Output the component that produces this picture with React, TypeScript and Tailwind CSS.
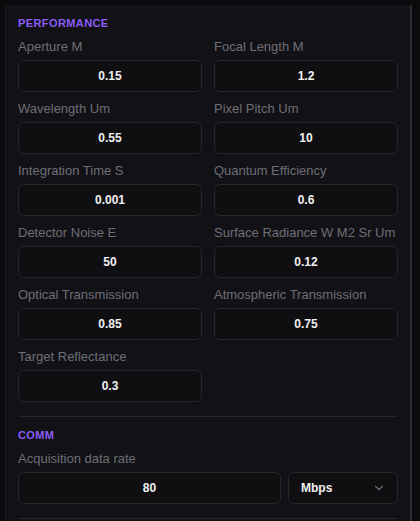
import React from 'react';
import { ChevronDown } from 'lucide-react';

const fields = [
  { label: 'Aperture M', value: '0.15' },
  { label: 'Focal Length M', value: '1.2' },
  { label: 'Wavelength Um', value: '0.55' },
  { label: 'Pixel Pitch Um', value: '10' },
  { label: 'Integration Time S', value: '0.001' },
  { label: 'Quantum Efficiency', value: '0.6' },
  { label: 'Detector Noise E', value: '50' },
  { label: 'Surface Radiance W M2 Sr Um', value: '0.12' },
  { label: 'Optical Transmission', value: '0.85' },
  { label: 'Atmospheric Transmission', value: '0.75' },
  { label: 'Target Reflectance', value: '0.3' },
];

const Field = ({ label, value }: { label: string; value: string }) => (
  <div className="flex flex-col">
    <label className="h-[18px] mb-1 text-[13px] leading-[18px] text-[#6e6e76] whitespace-nowrap">{label}</label>
    <input
      readOnly
      value={value}
      className="h-8 w-full rounded-md border border-[#26262b] bg-[#0f0f12] text-center text-[12px] font-bold text-[#f1f1f3] outline-none"
    />
  </div>
);

const SectionTitle = ({ children }: { children: React.ReactNode }) => (
  <h3 className="h-4 mb-[7px] text-[11px] leading-4 font-bold tracking-[0.4px] text-[#8b5cf6] uppercase">{children}</h3>
);

export default function App() {
  return (
    <div className="min-h-[521px] bg-[#0b0b0d] pt-[5px] pl-[5px] pr-[8px]" style={{ fontFamily: '"Liberation Sans", Arial, sans-serif' }}>
      <div className="h-[516px] overflow-hidden border-l border-r-2 border-l-[#1d1d21] border-r-[#2c2c31] bg-[#121216] px-3">
        <section className="pt-[10px] pb-[14px] border-b border-[#26262b]">
          <SectionTitle>Performance</SectionTitle>
          <div className="grid grid-cols-2 gap-x-3 gap-y-2">
            {fields.map((f) => (
              <Field key={f.label} label={f.label} value={f.value} />
            ))}
          </div>
        </section>
        <section className="pt-[10px] pb-[14px] border-b border-[#26262b]">
          <SectionTitle>Comm</SectionTitle>
          <label className="block h-[18px] mb-1 text-[13px] leading-[18px] text-[#6e6e76]">Acquisition data rate</label>
          <div className="flex gap-[7px]">
            <input
              readOnly
              value="80"
              className="h-8 flex-1 min-w-0 rounded-md border border-[#26262b] bg-[#0f0f12] text-center text-[12px] font-bold text-[#f1f1f3] outline-none"
            />
            <div className="h-8 w-[110px] flex items-center justify-between rounded-md border border-[#26262b] bg-[#0f0f12] pl-3 pr-[11px]">
              <span className="text-[12px] font-bold text-[#f1f1f3]">Mbps</span>
              <ChevronDown size={14} strokeWidth={2} className="text-[#6e6e76]" />
            </div>
          </div>
        </section>
      </div>
    </div>
  );
}
